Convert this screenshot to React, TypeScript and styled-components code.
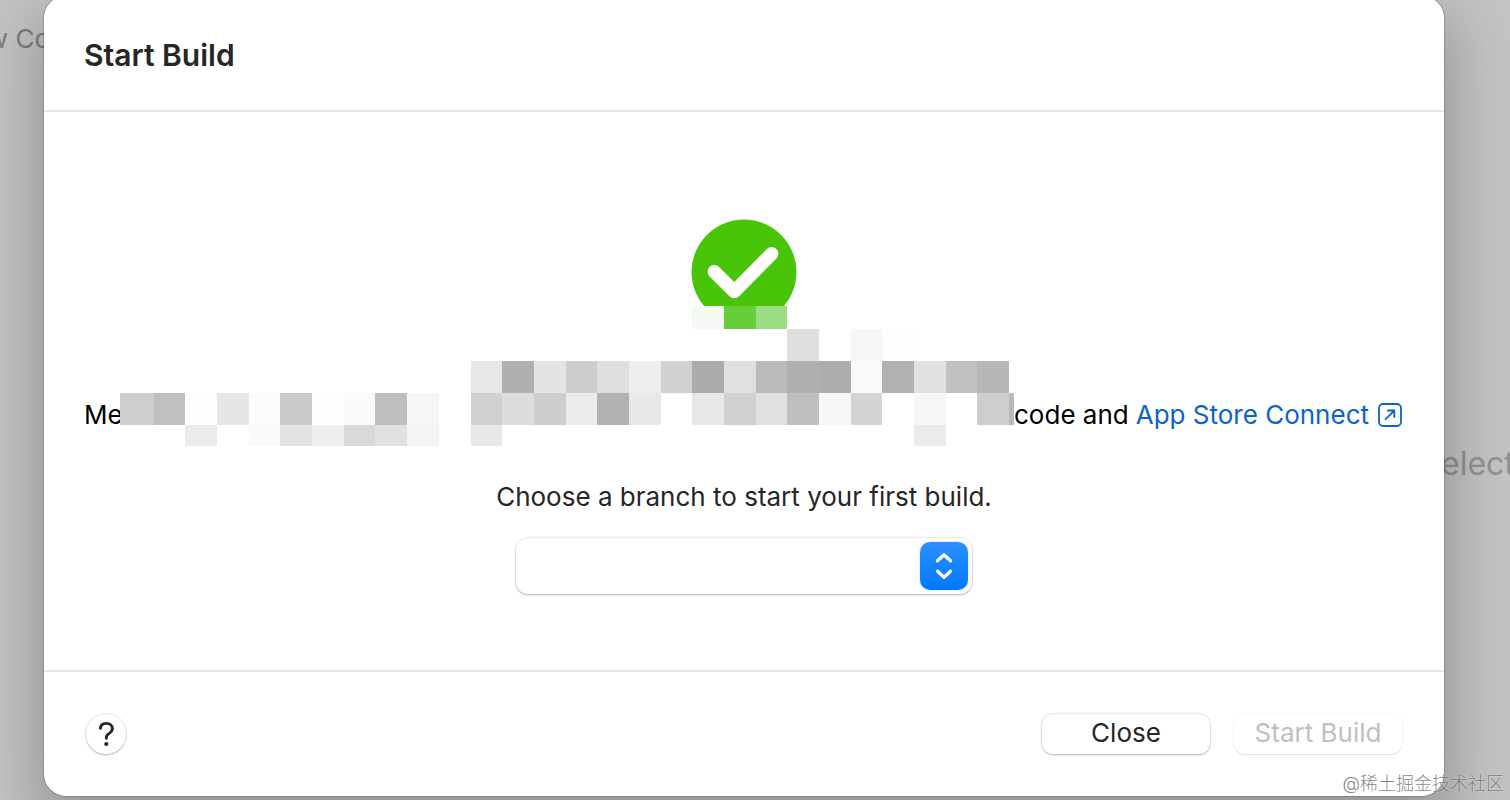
import React from "react";
import styled, { createGlobalStyle } from "styled-components";

const GlobalStyle = createGlobalStyle`
  *, *::before, *::after { box-sizing: border-box; }
  body {
    margin: 0;
    overflow: hidden;
    font-family: Inter, "Noto Sans CJK SC", sans-serif;
    font-size: 26px;
    line-height: 32px;
    color: #262626;
  }
`;

const Page = styled.main`
  position: relative;
  display: grid;
  grid-template-columns: 44px minmax(0, 1fr) 66px;
  min-height: 100vh;
  overflow: hidden;
  background: #c3c3c3;
`;

const Backdrop = styled.div<{ $side: "left" | "right" }>`
  display: flex;
  flex-direction: column;
  align-items: ${(p) => (p.$side === "left" ? "flex-end" : "flex-start")};
  padding-top: ${(p) => (p.$side === "left" ? 23 : 444)}px;
  margin: ${(p) => (p.$side === "left" ? "0 -6px 0 0" : "0 0 0 -3px")};
  font-size: ${(p) => (p.$side === "left" ? 26 : 32)}px;
  line-height: ${(p) => (p.$side === "left" ? 32 : 40)}px;
  color: ${(p) => (p.$side === "left" ? "#7c7c7c" : "#919191")};
  white-space: nowrap;
  overflow: hidden;
`;

const Dialog = styled.section`
  position: relative;
  z-index: 1;
  display: flex;
  flex-direction: column;
  margin: -4px 0 4px;
  border-radius: 22px;
  background: #fff;
  box-shadow: 0 0 0 1px rgba(0, 0, 0, 0.16), 0 24px 60px 8px rgba(0, 0, 0, 0.24);
`;

const Header = styled.header`
  padding: 39px 40px 35px;
  border-bottom: 2px solid #e6e6e6;
`;

const Title = styled.h1`
  margin: 0;
  font-size: 30px;
  font-weight: 600;
  line-height: 40px;
`;

const Body = styled.div`
  position: relative;
  flex: 1;
  display: flex;
  flex-direction: column;
  align-items: center;
  padding: 107px 40px 74px;
`;

const CheckBadge = styled.svg`
  width: 106px;
  height: 106px;
`;

const Message = styled.div`
  display: flex;
  justify-content: space-between;
  align-self: stretch;
  margin-top: 74px;
  padding-right: 2px;
  color: #000;
`;

const ConnectLink = styled.a`
  display: inline-flex;
  align-items: center;
  gap: 9px;
  margin-left: 7px;
  color: #0a63ce;
  text-decoration: none;
`;

const Phrase = styled.span`
  display: inline-flex;
`;

const Redaction = styled.svg`
  position: absolute;
  top: 0;
  left: 0;
  width: 1400px;
  height: 340px;
  pointer-events: none;
`;

const BranchLabel = styled.label`
  margin-top: 50px;
`;

const SelectBox = styled.div`
  position: relative;
  width: 456px;
  height: 56px;
  margin-top: 25px;
`;

const BranchSelect = styled.select`
  appearance: none;
  width: 100%;
  height: 100%;
  padding: 0 60px 0 16px;
  border: 0;
  border-radius: 12px;
  background: #fff;
  font: inherit;
  box-shadow: 0 0 1px 1px rgba(0, 0, 0, 0.08), 0 1px 2px rgba(0, 0, 0, 0.24);
`;

const Stepper = styled.span`
  position: absolute;
  top: 4px;
  right: 4px;
  display: grid;
  place-items: center;
  width: 48px;
  height: 48px;
  border-radius: 10px;
  background: linear-gradient(#2b8fff, #0079ff);
  box-shadow: 0 0 2px rgba(0, 100, 220, 0.3);
  pointer-events: none;
`;

const Footer = styled.footer`
  display: flex;
  align-items: center;
  gap: 24px;
  height: 126px;
  padding: 0 42px;
  border-top: 2px solid #e6e6e6;
`;

const PushButton = styled.button`
  width: 168px;
  height: 40px;
  padding: 0 0 2px;
  border: 0;
  border-radius: 11px;
  background: #fff;
  font: inherit;
  color: #262626;
  box-shadow: 0 0 1px 1px rgba(0, 0, 0, 0.08), 0 1px 2px rgba(0, 0, 0, 0.24);

  &:disabled {
    color: #bfbfbf;
    box-shadow: 0 0 1px 1px rgba(0, 0, 0, 0.04), 0 1px 1px rgba(0, 0, 0, 0.08);
  }
`;

const HelpButton = styled(PushButton)`
  display: grid;
  place-items: center;
  width: 40px;
  padding: 0;
  margin-right: auto;
  border-radius: 50%;
`;

const Watermark = styled.p`
  position: absolute;
  z-index: 2;
  right: 6px;
  bottom: 4px;
  margin: 0;
  font-size: 18px;
  font-weight: 300;
  line-height: 24px;
  color: rgba(90, 90, 90, 0.75);
  text-shadow: 0 0 2px rgba(255, 255, 255, 0.7);
`;

const columnsLeft = [76, 110, 141, 173, 205, 236, 268, 300, 331, 363, 395];
const columnsRight = [
  427, 458, 490, 522, 553, 585, 617, 648, 680, 712, 743, 775, 807, 838, 870, 902, 933, 965,
];

type Row = { top: number; height: number; columns: number[]; fills: string[] };

const rows: Row[] = [
  {
    top: 194, height: 23, columns: [616, 648, 680, 712, 743, 775],
    fills: ["#fff", "#f4f9f3", "#66cd3b", "#9bdd82", "#fff"],
  },
  {
    top: 217, height: 32, columns: columnsRight.slice(10, 15),
    fills: ["#dfdfdf", "#fff", "#f6f6f6", "#fdfdfd"],
  },
  {
    top: 249, height: 32, columns: columnsRight,
    fills: [
      "#e7e7e7", "#b0b0b0", "#e3e3e3", "#cdcdcd", "#dfdfdf", "#eeeeee", "#d1d1d1", "#ababab", "#e0e0e0",
      "#bababa", "#b0b0b0", "#adadad", "#fafafa", "#b1b1b1", "#e1e1e1", "#c1c1c1", "#b7b7b7",
    ],
  },
  {
    top: 281, height: 32, columns: columnsLeft,
    fills: [
      "#cecece", "#c0c0c0", "#fefefe", "#e6e6e6", "#fbfbfb", "#cbcbcb", "#fefefe", "#fafafa", "#bebebe", "#f6f6f6",
    ],
  },
  {
    top: 281, height: 32, columns: columnsRight.concat(970),
    fills: [
      "#d1d1d1", "#dddddd", "#cdcdcd", "#ebebeb", "#b2b2b2", "#e8e8e8", "#fff", "#e8e8e8", "#d0d0d0",
      "#e1e1e1", "#bfbfbf", "#f7f7f7", "#d4d4d4", "#fff", "#f6f6f6", "#fff", "#cecece", "#b9b9b9",
    ],
  },
  {
    top: 313, height: 21, columns: columnsLeft,
    fills: [
      "#fff", "#fff", "#ebebeb", "#fff", "#fafafa", "#e3e3e3", "#eeeeee", "#d9d9d9", "#e1e1e1", "#f4f4f4",
    ],
  },
  { top: 313, height: 21, columns: [427, 458], fills: ["#e7e7e7"] },
  { top: 313, height: 21, columns: [870, 902], fills: ["#ebebeb"] },
];

export default function App() {
  return (
    <Page>
      <GlobalStyle />
      <Backdrop $side="left">w Co</Backdrop>
      <Dialog role="dialog" aria-labelledby="dialog-title">
        <Header>
          <Title id="dialog-title">Start Build</Title>
        </Header>
        <Body>
          <CheckBadge viewBox="0 0 106 106" aria-hidden="true">
            <circle cx="53" cy="53" r="52.5" fill="#48c508" />
            <path
              d="M23.3 52.7L43.3 72.5L80.7 34.7"
              fill="none"
              stroke="#fff"
              strokeWidth="13.5"
              strokeLinecap="round"
              strokeLinejoin="round"
            />
          </CheckBadge>
          <Message>
            <span>Me</span>
            <Phrase>
              Xcode and
              <ConnectLink href="#">
                App Store Connect
                <svg width="24" height="24" viewBox="0 0 24 24" fill="none" stroke="currentColor" aria-hidden="true">
                  <rect x="1" y="1" width="22" height="22" rx="4.2" strokeWidth="1.8" />
                  <path d="M7.6 16.2L16 7.8M9.8 7.5H16.3V14" strokeWidth="1.8" strokeLinecap="round" strokeLinejoin="round" />
                </svg>
              </ConnectLink>
            </Phrase>
          </Message>
          <BranchLabel htmlFor="branch">Choose a branch to start your first build.</BranchLabel>
          <SelectBox>
            <BranchSelect id="branch" />
            <Stepper>
              <svg width="18" height="28" viewBox="0 0 18 28" fill="none" stroke="#fff" aria-hidden="true">
                <path
                  d="M2.5 8.8L9 2.8L15.5 8.8M2.5 19.2L9 25.2L15.5 19.2"
                  strokeWidth="3.2"
                  strokeLinecap="round"
                  strokeLinejoin="round"
                />
              </svg>
            </Stepper>
          </SelectBox>
          <Redaction viewBox="0 0 1400 340" shapeRendering="crispEdges" aria-hidden="true">
            {rows.map((row) =>
              row.fills.map((fill, i) => (
                <rect
                  key={`${row.top}-${row.columns[i]}`}
                  x={row.columns[i]}
                  y={row.top}
                  width={row.columns[i + 1] - row.columns[i]}
                  height={row.height}
                  fill={fill}
                />
              ))
            )}
          </Redaction>
        </Body>
        <Footer>
          <HelpButton type="button" aria-label="Help">
            <svg width="16" height="26" viewBox="0 0 16 26" fill="none" aria-hidden="true">
              <path
                d="M2.4 7.4C2.6 4.2 4.9 2.4 8.3 2.4C11.8 2.4 14.4 4.4 14.4 7.6C14.4 10 13 11.3 11 12.6C9.1 13.8 8.3 14.8 8.3 16.6V17.2"
                stroke="#262626"
                strokeWidth="2.9"
                strokeLinecap="round"
              />
              <circle cx="8.3" cy="23" r="2.1" fill="#262626" />
            </svg>
          </HelpButton>
          <PushButton type="button">Close</PushButton>
          <PushButton type="button" disabled>
            Start Build
          </PushButton>
        </Footer>
      </Dialog>
      <Backdrop $side="right">elect</Backdrop>
      <Watermark>@稀土掘金技术社区</Watermark>
    </Page>
  );
}
